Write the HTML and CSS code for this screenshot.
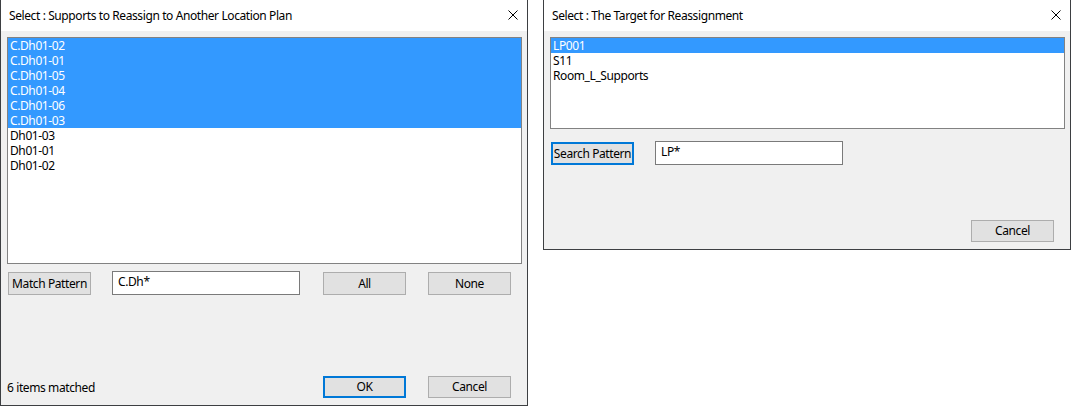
FILE: index.html
```html
<!DOCTYPE html>
<html>
<head>
<meta charset="utf-8">
<link rel="stylesheet" href="styles.css">
</head>
<body>
<div class="desk">
  <div class="dlg dlg-left">
    <div class="titlebar">
      <span class="title">Select : Supports to Reassign to Another Location Plan</span>
      <svg class="close" width="10" height="10" viewBox="0 0 10 10"><path d="M0.5 0.5 L9.5 9.5 M9.5 0.5 L0.5 9.5" stroke="#000" stroke-width="1" fill="none"/></svg>
    </div>
    <div class="body">
      <div class="list list-big">
        <div class="item sel">C.Dh01-02</div>
        <div class="item sel">C.Dh01-01</div>
        <div class="item sel">C.Dh01-05</div>
        <div class="item sel">C.Dh01-04</div>
        <div class="item sel">C.Dh01-06</div>
        <div class="item sel">C.Dh01-03</div>
        <div class="item">Dh01-03</div>
        <div class="item">Dh01-01</div>
        <div class="item">Dh01-02</div>
      </div>
      <div class="row row-pattern">
        <div class="btn btn-pat">Match Pattern</div>
        <div class="input">C.Dh*</div>
        <div class="btn btn-all">All</div>
        <div class="btn btn-none">None</div>
      </div>
      <div class="spacer"></div>
      <div class="row row-foot">
        <div class="status">6 items matched</div>
        <div class="btn btn-ok focus">OK</div>
        <div class="btn btn-cancel">Cancel</div>
      </div>
    </div>
  </div>
  <div class="dlg dlg-right">
    <div class="titlebar">
      <span class="title">Select : The Target for Reassignment</span>
      <svg class="close" width="10" height="10" viewBox="0 0 10 10"><path d="M0.5 0.5 L9.5 9.5 M9.5 0.5 L0.5 9.5" stroke="#000" stroke-width="1" fill="none"/></svg>
    </div>
    <div class="body">
      <div class="list list-small">
        <div class="item sel">LP001</div>
        <div class="item">S11</div>
        <div class="item">Room_L_Supports</div>
      </div>
      <div class="row row-search">
        <div class="btn btn-pat btn-search focus">Search Pattern</div>
        <div class="input input-r">LP*</div>
      </div>
      <div class="spacer"></div>
      <div class="row row-foot-r">
        <div class="btn btn-cancel">Cancel</div>
      </div>
    </div>
  </div>
</div>
</body>
</html>
```

FILE: styles.css
```css
* { box-sizing: border-box; }
html, body { margin: 0; padding: 0; background: #fff; }
body {
  width: 1072px;
  height: 406px;
  overflow: hidden;
  font-family: "Noto Sans", "Segoe UI", sans-serif;
  font-size: 12px;
  letter-spacing: -0.4px;
  color: #000;
}
.desk {
  display: flex;
  align-items: flex-start;
  gap: 15px;
}
.dlg {
  width: 528px;
  background: #f0f0f0;
  border: 1px solid #3d3f42;
  border-top: none;
  display: flex;
  flex-direction: column;
}
.dlg-left { height: 406px; }
.dlg-right { height: 250px; }
.titlebar {
  height: 31px;
  background: #fff;
  display: flex;
  align-items: center;
  justify-content: space-between;
  padding: 0 9px 0 8px;
  flex: none;
}
.title { line-height: 16px; }
.close { display: block; margin-top: -1px; }
.body {
  flex: 1;
  display: flex;
  flex-direction: column;
  padding: 6px 0 7px 6px;
}
.list {
  width: 515px;
  background: #fff;
  border: 1px solid #828282;
  flex: none;
}
.list-big { height: 227px; }
.list-small { height: 92px; }
.item {
  height: 15px;
  line-height: 15px;
  padding-left: 2px;
  white-space: nowrap;
}
.item.sel { background: #3399ff; color: #fff; }
.row { display: flex; align-items: flex-start; flex: none; }
.btn {
  width: 83px;
  height: 23px;
  background: #e1e1e1;
  border: 1px solid #adadad;
  display: flex;
  align-items: center;
  justify-content: center;
  white-space: nowrap;
  padding-bottom: 1px;
  flex: none;
}
.btn.focus { border: 2px solid #0078d7; }
.input {
  width: 188px;
  height: 24px;
  background: #fff;
  border: 1px solid #7a7a7a;
  padding-left: 5px;
  line-height: 19px;
  flex: none;
}
.row-pattern { margin-top: 7px; padding-left: 1px; }
.row-pattern .btn { margin-top: 1px; }
.row-pattern .input { margin-left: 21px; }
.btn-all { margin-left: 23px; }
.btn-none { margin-left: 22px; }
.spacer { flex: 1; }
.row-foot { align-items: center; }
.status { width: 316px; }
.row-foot .btn-cancel { margin-left: 22px; }
.btn-ok { height: 22px; }
.row-foot .btn-cancel { height: 22px; }
.row-search { margin-top: 12px; padding-left: 1px; }
.btn-search { margin-top: 1px; height: 23px; }
.input-r { margin-left: 21px; }
.row-foot-r { padding-left: 421px; }
.row-foot-r .btn { height: 22px; }
```
